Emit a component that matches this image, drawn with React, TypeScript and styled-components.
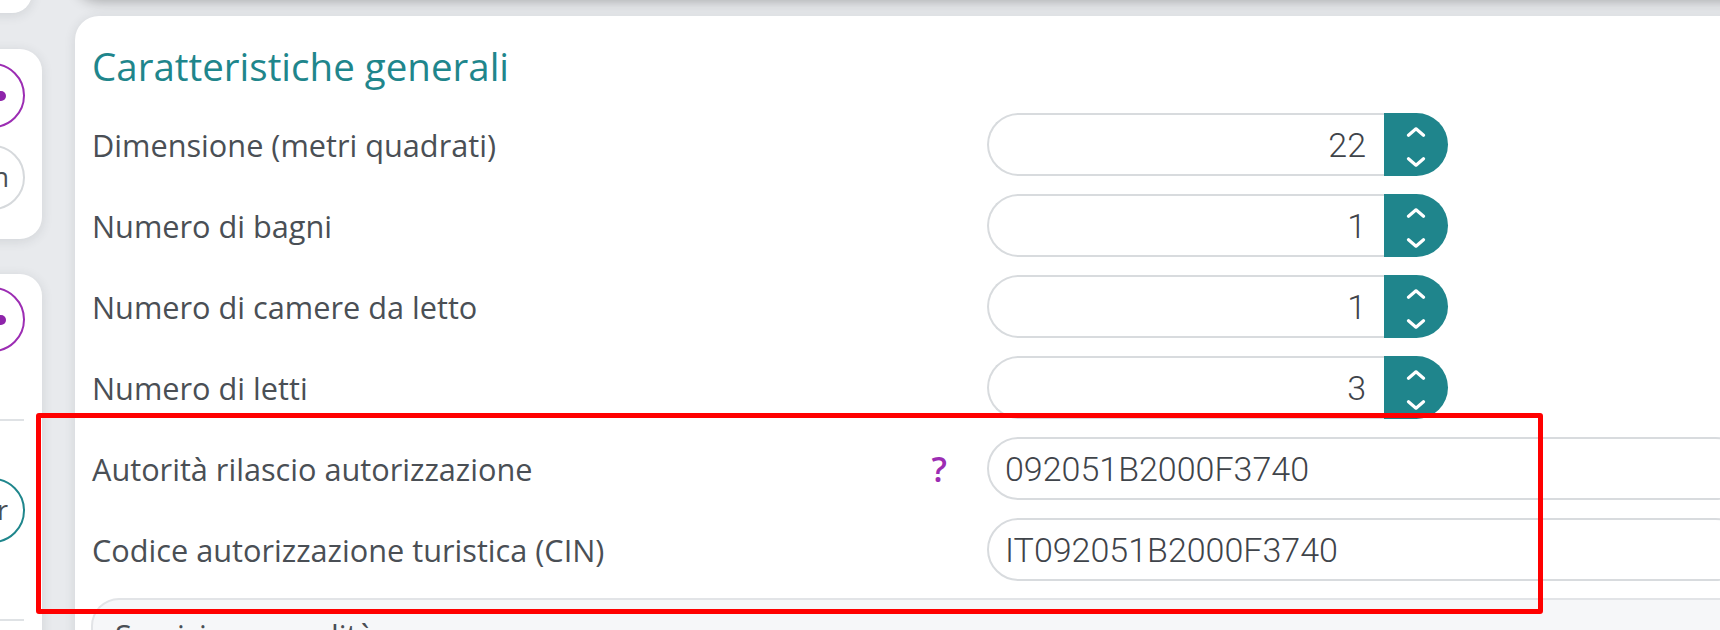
import React from "react";
import styled, { createGlobalStyle } from "styled-components";

const GlobalStyle = createGlobalStyle`
  html, body { margin: 0; padding: 0; }
  body {
    background: #e8eaed;
    font-family: "Open Sans", "Noto Sans", sans-serif;
    overflow: hidden;
  }
`;

const Page = styled.div`
  position: relative;
  width: 1720px;
  height: 630px;
  overflow: hidden;
  display: flex;
  align-items: flex-start;
  gap: 33px;
  background: #e8eaed;
`;

/* ---------- left rail ---------- */

const Sidebar = styled.aside`
  flex: none;
  width: 82px;
  margin-left: -40px;
  display: flex;
  flex-direction: column;
  align-items: flex-start;
`;

const SideCard = styled.div<{ $mt: number; $h: number; $w?: number; $pt?: number }>`
  box-sizing: border-box;
  width: ${(p) => p.$w ?? 82}px;
  height: ${(p) => p.$h}px;
  margin-top: ${(p) => p.$mt}px;
  padding-top: ${(p) => p.$pt ?? 0}px;
  background: #ffffff;
  border-radius: 22px;
  box-shadow: 0 2px 12px rgba(40, 50, 60, 0.12);
  display: flex;
  flex-direction: column;
  align-items: flex-start;
`;

const RoundBtn = styled.div<{ $color: string; $mt?: number; $pr: number }>`
  box-sizing: border-box;
  flex: none;
  width: 65px;
  height: 65px;
  margin-top: ${(p) => p.$mt ?? 0}px;
  border: 2px solid ${(p) => p.$color};
  border-radius: 50%;
  display: flex;
  align-items: center;
  justify-content: flex-end;
  padding-right: ${(p) => p.$pr}px;
`;

const Dot = styled.span`
  width: 10px;
  height: 10px;
  border-radius: 50%;
  background: #8e24aa;
`;

const RailText = styled.span<{ $color: string }>`
  color: ${(p) => p.$color};
  font-size: 27px;
  line-height: 1;
  padding-bottom: 3px;
`;

const RailDivider = styled.div<{ $mt: number }>`
  width: 64px;
  height: 2px;
  margin-top: ${(p) => p.$mt}px;
  background: #dfe2e5;
`;

/* ---------- main ---------- */

const Main = styled.main`
  flex: none;
  width: 1760px;
  display: flex;
  flex-direction: column;
`;

const PrevCardEdge = styled.div`
  height: 40px;
  margin-top: -42px;
  background: #ffffff;
  border-radius: 0 0 24px 24px;
  box-shadow: 0 3px 14px rgba(0, 0, 0, 0.3);
`;

const Card = styled.section`
  margin-top: 18px;
  min-height: 700px;
  padding: 24px 0 0 17px;
  background: #ffffff;
  border-radius: 24px 0 0 0;
  box-shadow: 0 2px 12px rgba(40, 50, 60, 0.12);
`;

const Title = styled.h2`
  margin: 0;
  font-size: 38.5px;
  line-height: 52px;
  font-weight: 400;
  color: #1f868c;
`;

const Form = styled.div`
  margin-top: 21px;
  display: grid;
  grid-template-columns: 895px 760px;
  grid-auto-rows: 63px;
  row-gap: 18px;
`;

const LabelCell = styled.div`
  display: flex;
  align-items: center;
  justify-content: space-between;
  padding-right: 40px;
  font-size: 30.7px;
  color: #4a4f55;
`;

const Help = styled.span`
  font-size: 34px;
  font-weight: 600;
  color: #9c2db3;
  line-height: 1;
`;

const Stepper = styled.div`
  display: flex;
  width: 461px;
  height: 63px;
`;

const baseInput = `
  box-sizing: border-box;
  height: 63px;
  margin: 0;
  background: #ffffff;
  border: 2px solid #d8dbde;
  font-family: Roboto, "Liberation Sans", sans-serif;
  font-weight: 300;
  font-size: 34px;
  color: #3f444a;
  outline: none;
`;

const StepperInput = styled.input`
  ${baseInput}
  flex: 1;
  min-width: 0;
  border-right: none;
  border-radius: 32px 0 0 32px;
  padding: 0 18px 0 16px;
  text-align: right;
`;

const StepperButton = styled.div`
  box-sizing: border-box;
  flex: none;
  width: 64px;
  height: 63px;
  padding: 14px 0 9px;
  background: #1f858c;
  border-radius: 0 32px 32px 0;
  display: flex;
  flex-direction: column;
  align-items: center;
  justify-content: space-between;
`;

const TextInput = styled.input`
  ${baseInput}
  width: 100%;
  border-radius: 32px;
  padding: 0 16px;
`;

const SubSection = styled.div`
  box-sizing: border-box;
  margin-top: 17px;
  margin-left: -1px;
  height: 120px;
  padding: 14px 0 0 22px;
  background: #f6f7f9;
  border: 2px solid #e2e4e7;
  border-right: none;
  border-radius: 28px 0 0 0;
  font-size: 30.7px;
  color: #4a4f55;
`;

const Highlight = styled.div`
  position: absolute;
  left: 36px;
  top: 413px;
  width: 1507px;
  height: 201px;
  box-sizing: border-box;
  border: 5px solid #ff0000;
  border-radius: 3px;
  pointer-events: none;
`;

const Chevron = ({ down }: { down?: boolean }) => (
  <svg width="20" height="10" viewBox="0 0 20 10" fill="none">
    <path
      d={down ? "M2.5 1.8 L10 8.2 L17.5 1.8" : "M2.5 8.2 L10 1.8 L17.5 8.2"}
      stroke="#ffffff"
      strokeWidth="3.2"
      strokeLinecap="round"
      strokeLinejoin="round"
    />
  </svg>
);

const numberRows = [
  { label: "Dimensione (metri quadrati)", value: "22" },
  { label: "Numero di bagni", value: "1" },
  { label: "Numero di camere da letto", value: "1" },
  { label: "Numero di letti", value: "3" },
];

const textRows = [
  { label: "Autorità rilascio autorizzazione", value: "092051B2000F3740", help: true },
  { label: "Codice autorizzazione turistica (CIN)", value: "IT092051B2000F3740", help: false },
];

export default function App() {
  return (
    <>
      <GlobalStyle />
      <Page>
        <Sidebar>
          <SideCard $mt={-27} $h={40} $w={72} />
          <SideCard $mt={36} $h={190} $pt={14}>
            <RoundBtn $color="#9c2db3" $pr={17}>
              <Dot />
            </RoundBtn>
            <RoundBtn $color="#d6d9dc" $mt={17} $pr={14}>
              <RailText $color="#4a4f55">en</RailText>
            </RoundBtn>
          </SideCard>
          <SideCard $mt={35} $h={420} $pt={13}>
            <RoundBtn $color="#9c2db3" $pr={17}>
              <Dot />
            </RoundBtn>
            <RailDivider $mt={67} />
            <RoundBtn $color="#1f868c" $mt={57} $pr={15}>
              <RailText $color="#4a4f55">fr</RailText>
            </RoundBtn>
            <RailDivider $mt={76} />
          </SideCard>
        </Sidebar>

        <Main>
          <PrevCardEdge />
          <Card>
            <Title>Caratteristiche generali</Title>
            <Form>
              {numberRows.map((r) => (
                <React.Fragment key={r.label}>
                  <LabelCell>{r.label}</LabelCell>
                  <Stepper>
                    <StepperInput type="text" readOnly value={r.value} />
                    <StepperButton>
                      <Chevron />
                      <Chevron down />
                    </StepperButton>
                  </Stepper>
                </React.Fragment>
              ))}
              {textRows.map((r) => (
                <React.Fragment key={r.label}>
                  <LabelCell>
                    <span>{r.label}</span>
                    {r.help && <Help>?</Help>}
                  </LabelCell>
                  <TextInput type="text" readOnly value={r.value} />
                </React.Fragment>
              ))}
            </Form>
            <SubSection>Servizi e comodità</SubSection>
          </Card>
        </Main>

        <Highlight />
      </Page>
    </>
  );
}
